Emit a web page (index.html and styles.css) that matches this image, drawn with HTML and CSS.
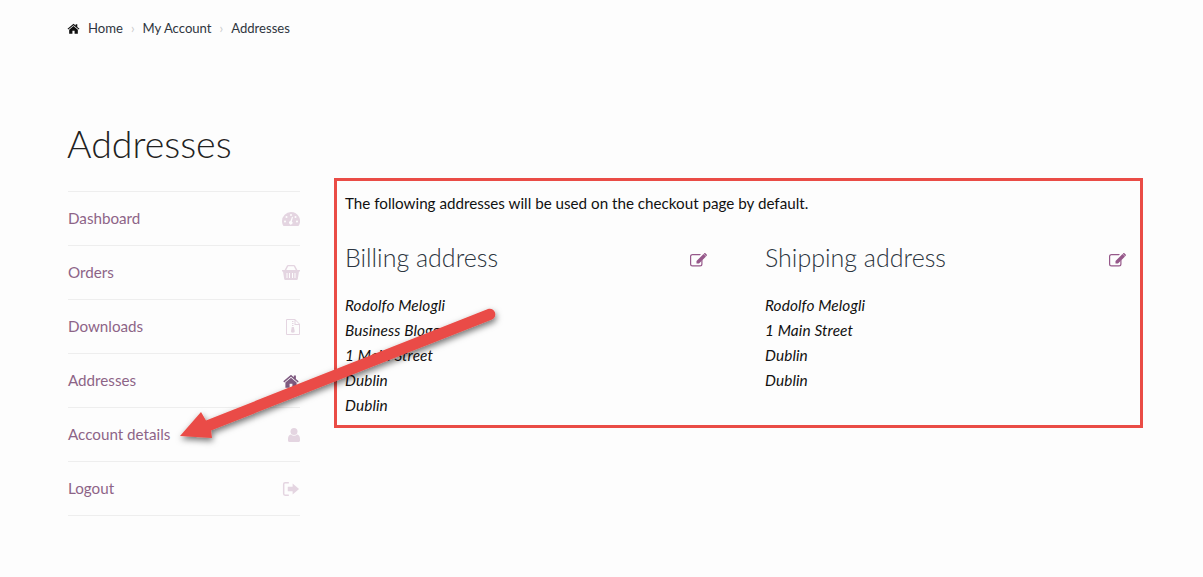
FILE: index.html
```html
<!DOCTYPE html>
<html>
<head>
  <meta charset="UTF-8">
  <title>Addresses</title>
  <link rel="stylesheet" href="styles.css">
</head>
<body>
  <nav class="breadcrumb">
    <svg class="crumb-home" viewBox="0 0 24 20"><path d="M12 1 1 10.500l1.300 1.500L12 3.800 21.700 12l1.300-1.500-4-3.400V2h-3v2.600z"/><path d="M12 5.500 4 12.200V19.500h6v-5.500h4v5.500h6v-7.300z"/></svg>
    <a href="#">Home</a>
    <span class="sep">›</span>
    <a href="#">My Account</a>
    <span class="sep">›</span>
    <span>Addresses</span>
  </nav>

  <h1>Addresses</h1>

  <div class="account">
    <ul class="account-nav">
      <li><a href="#">Dashboard</a>
        <svg class="nav-icon" viewBox="0 0 18 14"><path fill-rule="evenodd" d="M9 0a9 9 0 0 0-9 9c0 1.900.6 3.600 1.500 5h15A9 9 0 0 0 9 0zM9 2a1 1 0 1 1 0 2 1 1 0 0 1 0-2zM4.500 4a1 1 0 1 1 0 2 1 1 0 0 1 0-2zM13.500 4a1 1 0 1 1 0 2 1 1 0 0 1 0-2zM3 8.500a1 1 0 1 1 0 2 1 1 0 0 1 0-2zM15 8.500a1 1 0 1 1 0 2 1 1 0 0 1 0-2zM11 5 9.800 9.400a1.700 1.700 0 1 1-1.400-.3L10 4.800z"/></svg>
      </li>
      <li><a href="#">Orders</a>
        <svg class="nav-icon nav-icon-tall" viewBox="0 0 18 15"><path fill-rule="evenodd" d="M0 5h2.600L5 .6C5.200.2 5.600 0 6 0h6c.4 0 .8.2 1 .6L15.400 5H18v1.500h-1L15.800 14c-.1.600-.5 1-1 1H3.200c-.5 0-.9-.4-1-1L1 6.500H0zM4.300 5h9.400l-1.900-3.700H6.200zM4.500 8v5h1V8zM7 8v5h1V8zM10 8v5h1V8zM12.500 8v5h1V8z"/></svg>
      </li>
      <li><a href="#">Downloads</a>
        <svg class="nav-icon nav-icon-file" viewBox="0 0 14 16"><path fill-rule="evenodd" d="M1 0h8l5 5v10a1 1 0 0 1-1 1H1a1 1 0 0 1-1-1V1a1 1 0 0 1 1-1zM1 1v14h12V6H8.500V1zM9.500 1.500V5h3.500zM6 2h1.500v1H6zM6 4h1.500v1H6zM6 6h1.500v1H6zM5.800 8h2l.8 3.500a1.800 1.800 0 1 1-3.500 0z"/></svg>
      </li>
      <li class="is-active"><a href="#">Addresses</a>
        <svg class="nav-icon" viewBox="0 0 24 20"><path d="M12 1 1 10.500l1.300 1.500L12 3.800 21.700 12l1.300-1.500-4-3.400V2h-3v2.600z"/><path d="M12 5.500 4 12.200V19.500h6v-5.500h4v5.500h6v-7.300z"/></svg>
      </li>
      <li><a href="#">Account details</a>
        <svg class="nav-icon nav-icon-user" viewBox="0 0 12 14"><circle cx="6" cy="3.500" r="3.500"/><path d="M2.800 6.500C1 7 0 8.500 0 11v1.500C0 13.400.6 14 1.500 14h9c.9 0 1.500-.6 1.500-1.500V11c0-2.500-1-4-2.800-4.500a5 5 0 0 1-6.400 0z"/></svg>
      </li>
      <li><a href="#">Logout</a>
        <svg class="nav-icon" viewBox="0 0 15 13"><path d="M5.500 0v1.500H2c-.4 0-.6.300-.6.600v8.800c0 .3.200.6.600.6h3.500V13H2a2 2 0 0 1-2-2V2a2 2 0 0 1 2-2z"/><path d="M9 1.500 15 6.500l-6 5V8.500H4.500v-4H9z"/></svg>
      </li>
    </ul>

    <div class="account-content">
      <p class="intro">The following addresses will be used on the checkout page by default.</p>
      <div class="addresses">
        <section>
          <header>
            <h3>Billing address</h3>
            <svg class="edit-icon" viewBox="0 0 17 14"><path d="M2.500 1h8.500l-1.200 1.200H2.500c-.7 0-1.300.6-1.300 1.300v7.500c0 .7.600 1.300 1.300 1.300H10c.7 0 1.300-.6 1.300-1.300V8l1.200-1.200V11A2.500 2.500 0 0 1 10 13.500H2.500A2.500 2.500 0 0 1 0 11V3.500A2.500 2.500 0 0 1 2.500 1z"/><path d="M13.500 1 16 3.500 9 10.500H6.500V8zM14.300.3c.3-.3.800-.3 1.100 0l1.300 1.300c.3.300.3.800 0 1.100l-.5.500L13.800.8z"/></svg>
          </header>
          <address>Rodolfo Melogli<br>Business Blogger<br>1 Main Street<br>Dublin<br>Dublin</address>
        </section>
        <section>
          <header>
            <h3>Shipping address</h3>
            <svg class="edit-icon" viewBox="0 0 17 14"><path d="M2.500 1h8.500l-1.200 1.200H2.500c-.7 0-1.300.6-1.300 1.300v7.500c0 .7.600 1.300 1.300 1.300H10c.7 0 1.300-.6 1.300-1.300V8l1.200-1.200V11A2.500 2.500 0 0 1 10 13.500H2.500A2.500 2.500 0 0 1 0 11V3.500A2.500 2.500 0 0 1 2.500 1z"/><path d="M13.500 1 16 3.500 9 10.500H6.500V8zM14.300.3c.3-.3.800-.3 1.100 0l1.300 1.300c.3.300.3.800 0 1.100l-.5.500L13.800.8z"/></svg>
          </header>
          <address>Rodolfo Melogli<br>1 Main Street<br>Dublin<br>Dublin</address>
        </section>
      </div>
    </div>
  </div>

  <!-- red arrow drawn on top of the screenshot -->
  <svg class="arrow" viewBox="0 0 1203 577">
    <defs>
      <filter id="arrow-shadow" x="-10%" y="-10%" width="120%" height="130%">
        <feDropShadow dx="1" dy="3" stdDeviation="3" flood-color="#000" flood-opacity=".55"/>
      </filter>
    </defs>
    <path filter="url(#arrow-shadow)" d="M180 436 201 412 206 420.500 488 309C491 308 494 309.500 495 312.500 496 315.500 494.500 318.500 492 319.500L211 430.500 212 438Z" fill="#ea4c46"/>
  </svg>
</body>
</html>
```
FILE: styles.css
```css
body {
  margin: 0;
  height: 577px;
  overflow: hidden;
  position: relative;
  background: #fdfdfd;
  color: #111;
  font-family: "Lato", "Liberation Sans", sans-serif;
  font-size: 15px;
}

a {
  color: inherit;
  text-decoration: none;
}

.breadcrumb {
  display: flex;
  align-items: center;
  height: 20px;
  padding: 18px 0 0 67px;
  font-size: 13.1px;
  color: #2f3540;
}

.crumb-home {
  width: 13px;
  height: 11px;
  margin-right: 8px;
  fill: #111;
}

.sep {
  margin: 0 8px;
  color: #ccc;
  font-size: 13px;
}

h1 {
  margin: 82px 0 0 67px;
  height: 71px;
  font-size: 37.5px;
  line-height: 48px;
  font-weight: 300;
  color: #222;
}

.account {
  display: flex;
  padding-left: 68px;
}

.account-nav {
  list-style: none;
  margin: 0;
  padding: 0;
  width: 232px;
  border-top: 1px solid #eeeeee;
  align-self: flex-start;
}

.account-nav li {
  display: flex;
  align-items: center;
  justify-content: space-between;
  height: 53px;
  border-bottom: 1px solid #eeeeee;
  color: #8d6487;
  font-size: 15.2px;
}

.account-nav a {
  margin-bottom: 2px;
}

.nav-icon {
  width: 18px;
  height: 14px;
  fill: #e4d5e1;
}

.nav-icon-tall {
  height: 15px;
}

.nav-icon-file {
  width: 14px;
  height: 16px;
}

.nav-icon-user {
  width: 12px;
  height: 14px;
}

.is-active .nav-icon {
  fill: #7f5a80;
}

.account-content {
  box-sizing: border-box;
  width: 809px;
  height: 250px;
  margin: -13px 0 0 34px;
  padding: 10px 15px 0 8px;
  border: 3px solid #ea4c46;
}

.intro {
  margin: 0;
  font-size: 15.2px;
  line-height: 25px;
}

.addresses {
  display: grid;
  grid-template-columns: 362px 361px;
  column-gap: 58px;
  margin-top: 24px;
}

.addresses header {
  display: flex;
  align-items: center;
  justify-content: space-between;
  height: 34px;
}

h3 {
  margin: 0;
  font-size: 25px;
  font-weight: 300;
  color: #2c3540;
}

.edit-icon {
  width: 17px;
  height: 14px;
  margin-top: 6px;
  fill: #96588a;
}

address {
  margin-top: 19px;
  font-size: 15.4px;
  letter-spacing: 0.1px;
  line-height: 25px;
  font-style: italic;
}

.arrow {
  position: absolute;
  left: 0;
  top: 0;
  width: 1203px;
  height: 577px;
}
```
